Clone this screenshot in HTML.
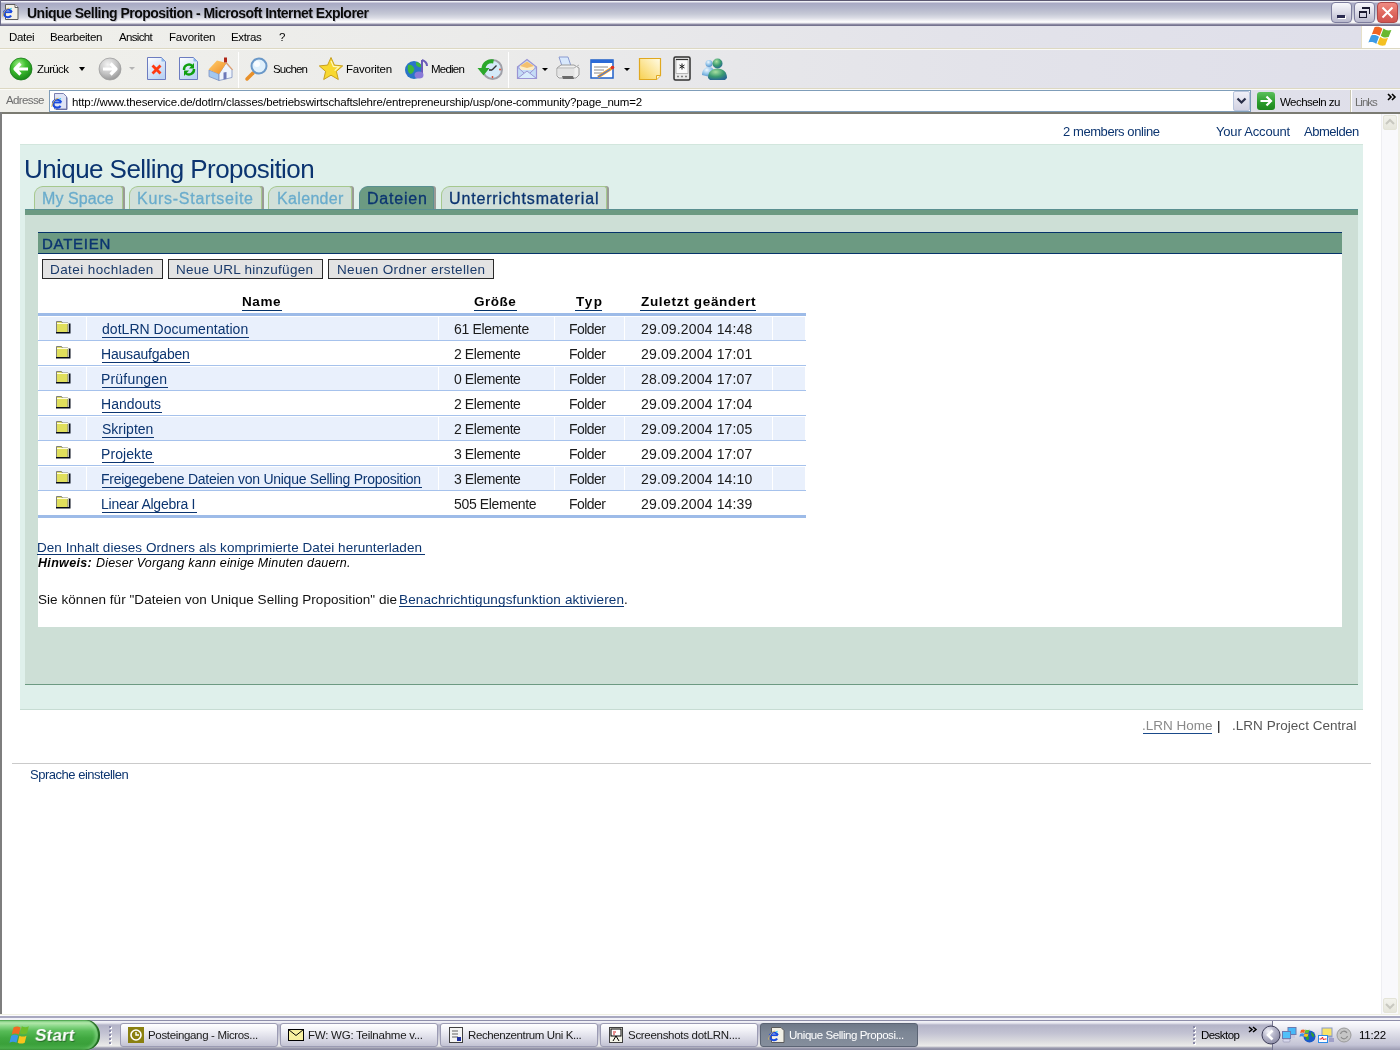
<!DOCTYPE html>
<html><head><meta charset="utf-8"><title>Unique Selling Proposition - Microsoft Internet Explorer</title>
<style>
*{margin:0;padding:0;box-sizing:border-box}
html,body{width:1400px;height:1050px;overflow:hidden;background:#fff;font-family:"Liberation Sans",sans-serif}
.a{position:absolute}
.t{position:absolute;white-space:nowrap;line-height:1;will-change:transform}
svg{position:absolute;overflow:visible}
#titlebar{left:0;top:0;width:1400px;height:26px;background:linear-gradient(#5c5872 0px,#5c5872 1px,#f2f2f8 1px,#eeeef4 2px,#a8a8c4 3px,#acaec6 5px,#b6b8cc 9px,#c6c9d6 14px,#dcdde6 18px,#f6f6f8 21px,#ffffff 22px,#e8e8ec 23px,#a4a2b8 24px,#74728e 25px,#74728e 26px)}
#tbl{left:0;top:0;width:2px;height:26px;background:#8c8ca6}
.grad{background:linear-gradient(90deg,#f0f0eb 0%,#ebebea 35%,#e3e3ea 70%,#dfdfea 100%)}
#menubar{left:0;top:26px;width:1361px;height:22px}
#menubar2{left:1361px;top:26px;width:39px;height:22px;background:#fff;border-left:1px solid #e6e0c8}
#sep1{left:0;top:48px;width:1400px;height:1px;background:#ddd8c2}
#sep1b{left:0;top:49px;width:1400px;height:1px;background:#fbfbf8}
#toolbar{left:0;top:50px;width:1400px;height:38px}
#sep2{left:0;top:88px;width:1400px;height:1px;background:#ddd8c2}
#sep2b{left:0;top:89px;width:1400px;height:1px;background:#fbfbf8}
#addrbar{left:0;top:90px;width:1400px;height:22px}
#addrinput{left:49px;top:90px;width:1202px;height:22px;background:#fff;border:1px solid #7f9db9}
#ddbtn{left:1233px;top:91px;width:17px;height:20px;border:1px solid #b8c4dc;border-radius:2px;background:linear-gradient(#f0f0f8,#d2d2e2)}
#linksep{left:1350px;top:90px;width:2px;height:22px;border-left:1px solid #c9c6b4;border-right:1px solid #fff}
#cborder{left:0;top:112px;width:1400px;height:2px;background:#7b7b72}
#lborder{left:0;top:112px;width:2px;height:903px;background:#7e7e7e}
#rborder{left:1398px;top:114px;width:2px;height:901px;background:#f0f0e6}
#scroll{left:1381px;top:114px;width:17px;height:900px;background:#f9f9fc;border-left:1px solid #eeeef2}
.sbtn{left:1383px;width:14px;height:15px;border-radius:2px;background:linear-gradient(#f2f2ec,#e6e6dc);border:1px solid #e4e4d8}
.tsep{width:1px;height:36px;top:52px;background:#cfcfc8;border-right:1px solid #fff}
.ddarrow{width:0;height:0;border-left:3px solid transparent;border-right:3px solid transparent;border-top:3px solid #000}
/* page */
#panel{left:20px;top:144px;width:1343px;height:566px;background:#dff0eb;border-top:1px solid #d2e6dd;border-bottom:1px solid #c7dcd3}
#gbar{left:25px;top:209px;width:1333px;height:6px;background:#6c9a82;border-top:1px solid #5a9090}
#inner{left:25px;top:215px;width:1333px;height:470px;background:#cddfd6;border-bottom:1px solid #6c9a82}
#wbox{left:38px;top:232px;width:1304px;height:395px;background:#fff}
#hband{left:38px;top:232px;width:1304px;height:22px;background:#6c9a82;border-top:1px solid #06336a;border-bottom:1px solid #06336a}
.btn{top:259px;height:20px;background:#e3e3e3;border:1px solid #2a2a2a}
.tab{top:186px;height:23px;background:#d1e0d9;border:1px solid #a6c88e;border-bottom:none;border-radius:9px 3px 0 0;box-shadow:2px 0 0 #9a9a96}
.tab.on{background:#6c9a82;border-color:#5a9090}
.ul{height:1px;background:#0c3570}
.row{left:39px;width:766px;height:23px}
.row.b{background:#e9f0fc}
.div{left:38px;width:768px;height:1px;background:#a6c2ec}
.vsep{width:1px;height:23px;background:#fff}
.fold{width:17px;height:14px}
#hr{left:12px;top:763px;width:1359px;height:1px;background:#cacaca}
/* taskbar */
#winbot{left:0;top:1014px;width:1400px;height:1px;background:#efefe2}
#taskbar{left:0;top:1015px;width:1400px;height:35px;background:linear-gradient(#fbfbfc 0px,#fbfbfc 1px,#a8a8c0 1px,#a8a8c0 3px,#f2f2f8 3px,#f2f2f8 5px,#8e8eaa 5px,#8e8eaa 6px,#f4f4f8 6px,#e8e8f0 8px,#b4b4c8 10px,#c2c2d2 18px,#dadade 26px,#ececea 31px,#9a9aae 33px,#8a8aa0 35px)}
#tray{left:1272px;top:1021px;width:128px;height:29px;border-left:1px solid #767690;background:linear-gradient(#fcfcfe 0px,#f0f0f6 6px,#d6d6e2 16px,#c4c4d6 24px,#9c9cb2 29px)}
.task{top:1023px;width:158px;height:24px;border-radius:3px;border:1px solid #9b9bb3;background:linear-gradient(#ffffff 0%,#f0f0f6 30%,#d8d8e4 70%,#c3c3d3 100%)}
.task.on{background:linear-gradient(#6e7888 0%,#7d8796 40%,#858e9c 100%);border-color:#5b6474}
#start{left:0;top:1020px;width:100px;height:30px;border-radius:0 14px 14px 0/0 15px 15px 0;background:linear-gradient(#2a8a2a 0px,#7ccc7c 1px,#b4e8ac 3px,#8cd88a 6px,#58bc58 11px,#40a840 18px,#3aa03a 24px,#48ac48 28px,#2a8a2a 30px);box-shadow:inset -2px 0 1px rgba(20,90,20,.9), inset -5px 0 3px rgba(160,230,160,.5)}
</style></head>
<body>
<div class="a" id="titlebar"></div>
<!-- title IE icon -->
<div class="a" style="left:0;top:0;width:1px;height:26px;background:#6a6a88"></div>
<svg style="left:2px;top:4px" width="17" height="16" viewBox="0 0 17 16">
 <path d="M3.5 .5h9.5l3 3v12h-12.5z" fill="#f2f0e6" stroke="#5c5c5c" stroke-width="1"/>
 <path d="M13 .5v3h3" fill="#fff" stroke="#5c5c5c" stroke-width="1"/>
 <g transform="translate(0.0 3.0) scale(1.0000 1.0000)"><path d="M1.2 5.2h8.6" stroke="#1a4ae0" stroke-width="1.8"/>
  <path d="M9.8 5.2A4.1 3.8 0 1 0 9.2 8.6" fill="none" stroke="#1a4ae0" stroke-width="2"/>
  <path d="M8 2.2l1.6-.8" stroke="#30c8f0" stroke-width="1.2"/>
  <path d="M.6 9.5C1 5.5 3.5 2 7 1" fill="none" stroke="#e8c050" stroke-width=".9"/></g>
</svg>
<!-- title buttons -->
<div class="a" style="left:1331px;top:2px;width:21px;height:21px;border-radius:4px;border:1px solid #7e7e9e;background:linear-gradient(#f8f8fc,#dcdce8 50%,#b8b8cc)"></div>
<div class="a" style="left:1337px;top:15px;width:8px;height:3px;background:#2a2a50;box-shadow:1px 1px 0 #fff"></div>
<div class="a" style="left:1354px;top:2px;width:21px;height:21px;border-radius:4px;border:1px solid #7e7e9e;background:linear-gradient(#f8f8fc,#dcdce8 50%,#b8b8cc)"></div>
<div class="a" style="left:1362px;top:7px;width:8px;height:7px;border-top:2px solid #1a1a30;border-right:1px solid #1a1a30"></div>
<div class="a" style="left:1359px;top:11px;width:8px;height:7px;border:1px solid #1a1a30;border-top-width:2px;background:transparent"></div>
<div class="a" style="left:1377px;top:2px;width:21px;height:21px;border-radius:4px;border:1px solid #b04848;background:linear-gradient(#f08c84,#e06a60 50%,#d05450)"></div>
<svg style="left:1377px;top:2px" width="21" height="21"><path d="M5.5 5.5l10 10M15.5 5.5l-10 10" stroke="#fff" stroke-width="2"/></svg>

<div class="a grad" id="menubar"></div><div class="a" id="menubar2"></div>
<!-- windows logo -->
<svg style="left:1370px;top:26px" width="23" height="22" viewBox="1 1.5 19 18">
 <g transform="rotate(10 10 10)">
 <path d="M3.5 3.5c2.2-1.2 4.4-1.2 6.6 0l-1.2 6.2c-2.2-1.2-4.4-1.2-6.6 0z" fill="#f26522"/>
 <path d="M11 3.2c2.2 1.2 4.4 1.2 6.6 0l-1.2 6.2c-2.2 1.2-4.4 1.2-6.6 0z" fill="#68b830"/>
 <path d="M1.9 10.6c2.2-1.2 4.4-1.2 6.6 0l-1.2 6.2c-2.2-1.2-4.4-1.2-6.6 0z" fill="#3d9be6"/>
 <path d="M9.4 10.3c2.2 1.2 4.4 1.2 6.6 0l-1.2 6.2c-2.2 1.2-4.4 1.2-6.6 0z" fill="#f4c020"/>
 </g>
</svg>
<div class="a" id="sep1"></div><div class="a" id="sep1b"></div>
<div class="a grad" id="toolbar"></div>
<div class="a" id="sep2"></div><div class="a" id="sep2b"></div>
<div class="a grad" id="addrbar"></div>
<div class="a" id="addrinput"></div>
<div class="a" id="ddbtn"></div>
<svg style="left:1236px;top:97px" width="11" height="8"><path d="M1.5 1.5l4 4 4-4" fill="none" stroke="#2a2e48" stroke-width="2.2"/></svg>
<div class="a" id="linksep"></div>
<!-- go icon -->
<div class="a" style="left:1257px;top:92px;width:18px;height:18px;border-radius:3px;background:linear-gradient(#5cc05c,#2a9a2a 60%,#1e861e)"></div>
<svg style="left:1257px;top:92px" width="18" height="18"><path d="M3.5 9h10M9.5 4.5l4.5 4.5-4.5 4.5" fill="none" stroke="#fff" stroke-width="2.2"/></svg>
<svg style="left:1386px;top:92px" width="12" height="10"><path d="M2 2l3 3-3 3M6 2l3 3-3 3" fill="none" stroke="#000" stroke-width="1.6"/></svg>
<!-- address IE icon -->
<svg style="left:51px;top:92px" width="17" height="18" viewBox="0 0 17 18">
 <path d="M3.5 1.5h9l3 3v12.5h-12z" fill="#dfe4f6" stroke="#7c80b0" stroke-width="1"/>
 <path d="M5 17.5h11v-12" fill="none" stroke="#6a6ea0" stroke-width="1"/>
 <g transform="translate(0.0 5.0) scale(1.0417 1.0455)"><path d="M1.2 5.2h8.6" stroke="#1a4ae0" stroke-width="1.8"/>
  <path d="M9.8 5.2A4.1 3.8 0 1 0 9.2 8.6" fill="none" stroke="#1a4ae0" stroke-width="2"/>
  <path d="M8 2.2l1.6-.8" stroke="#30c8f0" stroke-width="1.2"/>
  <path d="M.6 9.5C1 5.5 3.5 2 7 1" fill="none" stroke="#e8c050" stroke-width=".9"/></g>
</svg>
<!-- toolbar icons -->
<svg style="left:9px;top:57px" width="24" height="24" viewBox="0 0 24 24">
 <defs><radialGradient id="gg" cx="40%" cy="30%" r="70%"><stop offset="0" stop-color="#a8f090"/><stop offset=".45" stop-color="#40c030"/><stop offset="1" stop-color="#1a8a1a"/></radialGradient>
 <radialGradient id="gr" cx="40%" cy="30%" r="70%"><stop offset="0" stop-color="#f4f4f4"/><stop offset=".6" stop-color="#c4c4c4"/><stop offset="1" stop-color="#9a9a9a"/></radialGradient></defs>
 <circle cx="12" cy="12" r="11" fill="url(#gg)" stroke="#1a7a1a" stroke-width=".8"/>
 <path d="M19 12H7M11.5 6.5L6 12l5.5 5.5" fill="none" stroke="#fff" stroke-width="3.2" stroke-linejoin="round"/>
</svg>
<div class="a ddarrow" style="left:79px;top:67px;border-width:4px 3px 0 3px"></div>
<svg style="left:98px;top:57px" width="24" height="24" viewBox="0 0 24 24">
 <circle cx="12" cy="12" r="11" fill="url(#gr)" stroke="#a0a0a0" stroke-width=".8"/>
 <path d="M5 12h12M12.5 6.5L18 12l-5.5 5.5" fill="none" stroke="#fff" stroke-width="3.2" stroke-linejoin="round"/>
</svg>
<div class="a ddarrow" style="left:129px;top:67px;border-top-color:#b4b4b4"></div>
<!-- stop -->
<svg style="left:147px;top:57px" width="20" height="24" viewBox="0 0 20 24">
 <defs><linearGradient id="pg" x1="0" y1="0" x2=".6" y2="1"><stop offset="0" stop-color="#ffffff"/><stop offset="1" stop-color="#bcd4f4"/></linearGradient></defs>
 <path d="M.5 .5h14l4 4v18h-18z" fill="url(#pg)" stroke="#6c7cc0" stroke-width="1"/>
 <path d="M14.5 .5v4h4z" fill="#8cb8ec"/>
 <path d="M6.5 9.5l6 6M12.5 9.5l-6 6" stroke="#ff3a12" stroke-width="2.8" stroke-linecap="square"/>
</svg>
<!-- refresh -->
<svg style="left:179px;top:57px" width="20" height="24" viewBox="0 0 20 24">
 <path d="M.5 .5h14l4 4v18h-18z" fill="url(#pg)" stroke="#6c7cc0" stroke-width="1"/>
 <path d="M14.5 .5v4h4z" fill="#8cb8ec"/>
 <path d="M5 13a5 5 0 0 1 8.5-4" fill="none" stroke="#10a010" stroke-width="2.4"/>
 <path d="M15 6v5.5h-5z" fill="#10a010"/>
 <path d="M15 12a5 5 0 0 1-8.5 4" fill="none" stroke="#10a010" stroke-width="2.4"/>
 <path d="M5 19v-5.5h5z" fill="#10a010"/>
</svg>
<!-- home -->
<svg style="left:207px;top:56px" width="26" height="26" viewBox="0 0 26 26">
 <defs><linearGradient id="rf" x1="0" y1="0" x2="1" y2="1"><stop offset="0" stop-color="#ffd070"/><stop offset="1" stop-color="#f08a20"/></linearGradient></defs>
 <path d="M2 14l10 4v6.5l-10-4z" fill="#a4c8f0" stroke="#7c90c0" stroke-width=".8"/>
 <path d="M12 18l7-11 6 6.5v8l-13 3z" fill="#eef4fc" stroke="#7c90c0" stroke-width=".8"/>
 <path d="M16.5 16.5l3-.6v7l-3 .7z" fill="#6c78b8"/>
 <path d="M1.5 13.5l8.5-9 9.5 2.5-7.5 11z" fill="url(#rf)"/>
 <path d="M19.5 7l6 6.8" stroke="#e0a070" stroke-width="1.2"/>
 <rect x="17" y="1.5" width="3" height="5" fill="#b02818"/>
</svg>
<div class="a tsep" style="left:238px"></div>
<!-- search -->
<svg style="left:244px;top:57px" width="26" height="25" viewBox="0 0 26 25">
 <path d="M3 22l6-6" stroke="#e8902a" stroke-width="3.5" stroke-linecap="round"/>
 <circle cx="15" cy="9" r="7.5" fill="#dff0fc" stroke="#6a98c8" stroke-width="2"/>
 <circle cx="13" cy="7" r="3" fill="#fff" opacity=".8"/>
</svg>
<!-- star -->
<svg style="left:318px;top:56px" width="26" height="26" viewBox="0 0 26 26">
 <path d="M13 1.5l3.4 7.6 8.3.8-6.3 5.5 1.9 8.1L13 19.2l-7.3 4.3 1.9-8.1L1.3 9.9l8.3-.8z" fill="#f8d830" stroke="#c8a020" stroke-width="1" stroke-linejoin="round"/>
 <path d="M13 5l2.4 5.4 5.5.6-4.2 3.6" fill="none" stroke="#fff8c0" stroke-width="1.2"/>
</svg>
<!-- media -->
<svg style="left:404px;top:57px" width="26" height="25" viewBox="0 0 26 25">
 <circle cx="10" cy="13" r="9" fill="#2a74c8"/>
 <path d="M4 8c3-1 5 1 6 3s-1 5-3 6c-2 0-4-3-3-9zM12 5c3 0 6 3 5 5-2 1-4-1-5-2z" fill="#3cb83c"/>
 <path d="M18 3v14" stroke="#6a5ab8" stroke-width="2"/>
 <path d="M18 3c3 1 5 3 5 6" fill="none" stroke="#6a5ab8" stroke-width="2"/>
 <ellipse cx="15" cy="18" rx="4.5" ry="3.5" fill="#8a7ad8"/>
</svg>
<!-- history -->
<svg style="left:477px;top:57px" width="26" height="25" viewBox="0 0 26 25">
 <circle cx="15.5" cy="12.5" r="9.5" fill="#d4eaf8" stroke="#a0a0a8" stroke-width="2"/>
 <path d="M15 13l4.5-4.5M15 13h-3" stroke="#303030" stroke-width="1.4"/>
 <circle cx="23" cy="12.5" r=".9" fill="#e04020"/><circle cx="15.5" cy="20" r=".9" fill="#e04020"/>
 <path d="M16.5 4.5C11 3.5 6.5 6.5 6.5 12" fill="none" stroke="#2aa82a" stroke-width="4"/>
 <path d="M.5 11h12L6.5 18.5z" fill="#2aa82a"/>
</svg>
<div class="a tsep" style="left:508px"></div>
<!-- mail -->
<svg style="left:516px;top:57px" width="24" height="24" viewBox="0 0 24 24">
 <path d="M1.5 10L11 2.5 20.5 10v11.5h-19z" fill="#c4dcf6" stroke="#9a94d4" stroke-width="1.2"/>
 <path d="M4 9l7-4.5 7 4.5v4H4z" fill="#fcecc8"/>
 <path d="M4 9l7-4.5 7 4.5-7 2z" fill="#f4c070"/>
 <path d="M1.5 21.5L11 14l9.5 7.5z" fill="#d8ecfc" stroke="#9a94d4" stroke-width="1"/>
 <path d="M1.5 10L8 16M20.5 10L14 16" stroke="#9a94d4" stroke-width="1"/>
</svg>
<div class="a ddarrow" style="left:542px;top:68px"></div>
<!-- print -->
<svg style="left:555px;top:56px" width="26" height="26" viewBox="0 0 26 26">
 <path d="M4 1h9l3 9H7z" fill="#d8e8fc" stroke="#8a9ad0" stroke-width="1"/>
 <path d="M2 12l4-3h13l5 3v7l-3 3H4l-2-2z" fill="#f0f0f0" stroke="#9a9a9a" stroke-width="1"/>
 <path d="M2 12h17l5-3" fill="none" stroke="#b0b0b0" stroke-width="1"/>
 <path d="M2.5 13h17v7h-17z" fill="#e4e4e4"/>
 <path d="M7 20h11l1 3H8z" fill="#6a6a6a"/>
</svg>
<!-- edit -->
<svg style="left:590px;top:59px" width="26" height="21" viewBox="0 0 26 21">
 <rect x="1" y="1" width="22" height="18" fill="#fff" stroke="#2060c8" stroke-width="1.5"/>
 <rect x="1" y="1" width="22" height="3" fill="#2a6ad8"/>
 <path d="M4 8h14M4 11h10M4 14h8" stroke="#8a8a8a" stroke-width="1"/>
 <path d="M8 18l14-9" stroke="#f0a030" stroke-width="3"/>
 <path d="M8 18l12-7.5" stroke="#4a7ad8" stroke-width="1.2"/>
 <circle cx="22.5" cy="8.5" r="1.8" fill="#e03020"/>
</svg>
<div class="a ddarrow" style="left:624px;top:68px"></div>
<!-- note -->
<svg style="left:638px;top:57px" width="24" height="24" viewBox="0 0 24 24">
 <defs><linearGradient id="ng" x1="1" y1="0" x2="0" y2="1"><stop offset="0" stop-color="#fffce8"/><stop offset="1" stop-color="#f8d050"/></linearGradient></defs>
 <path d="M1.5 1.5h21v17l-4 4h-17z" fill="url(#ng)" stroke="#e0a820" stroke-width="1.2"/>
 <path d="M18.5 22.5v-4h4" fill="#fff8d0" stroke="#e0a820" stroke-width="1"/>
</svg>
<!-- phone -->
<svg style="left:673px;top:56px" width="19" height="26" viewBox="0 0 19 26">
 <rect x="1" y="1" width="16" height="23" rx="1.5" fill="#e8e8e8" stroke="#303030" stroke-width="1.5"/>
 <rect x="3" y="3.5" width="12" height="14" fill="#fafafa" stroke="#909090" stroke-width=".6"/>
 <path d="M3 3.5h12" stroke="#303030" stroke-width="1.2"/>
 <path d="M9 7.5v6M6.5 9l5 3M11.5 9l-5 3" stroke="#202020" stroke-width="1"/>
 <path d="M4 20.5h2M8 20.5h2M12 20.5h2" stroke="#808080" stroke-width="1.5"/>
</svg>
<!-- messenger -->
<svg style="left:701px;top:57px" width="27" height="24" viewBox="0 0 27 24">
 <defs><radialGradient id="mg" cx="40%" cy="30%" r="70%"><stop offset="0" stop-color="#a8e0a0"/><stop offset=".6" stop-color="#3a9a70"/><stop offset="1" stop-color="#2a6a90"/></radialGradient>
 <radialGradient id="mb" cx="40%" cy="30%" r="70%"><stop offset="0" stop-color="#f0f8ff"/><stop offset=".6" stop-color="#8ac0e8"/><stop offset="1" stop-color="#5a90c8"/></radialGradient></defs>
 <circle cx="8" cy="6.5" r="3.5" fill="url(#mb)"/>
 <path d="M1 18c0-5 3-8 7-8s5 3 5 6l-4 4z" fill="url(#mb)"/>
 <circle cx="16.5" cy="6.5" r="5" fill="url(#mg)"/>
 <path d="M7 21c0-6 4-9.5 9.5-9.5s9.5 3.5 9.5 9.5l-2 2H9z" fill="url(#mg)"/>
</svg>

<!-- content frame -->
<div class="a" id="cborder"></div>
<div class="a" id="lborder"></div>
<div class="a" id="rborder"></div>
<div class="a" id="scroll"></div>
<div class="a sbtn" style="top:115px"></div>
<svg style="left:1384px;top:117px" width="12" height="10"><path d="M2 7l4-4 4 4" fill="none" stroke="#c8c8c0" stroke-width="2"/></svg>
<div class="a sbtn" style="top:998px"></div>
<svg style="left:1384px;top:1001px" width="12" height="10"><path d="M2 3l4 4 4-4" fill="none" stroke="#c8c8c0" stroke-width="2"/></svg>

<!-- page -->
<div class="a" id="panel"></div>
<div class="a tab" style="left:34px;width:89px"></div>
<div class="a tab" style="left:129px;width:133px"></div>
<div class="a tab" style="left:268px;width:84px"></div>
<div class="a tab on" style="left:359px;width:75px"></div>
<div class="a tab" style="left:441px;width:166px"></div>
<div class="a" id="gbar"></div>
<div class="a" id="inner"></div>
<div class="a" id="wbox"></div>
<div class="a" id="hband"></div>
<div class="a btn" style="left:42px;width:121px"></div>
<div class="a btn" style="left:168px;width:155px"></div>
<div class="a btn" style="left:328px;width:166px"></div>
<!-- header underlines -->
<div class="a ul" style="left:242px;top:310px;width:40px;background:#06336a"></div>
<div class="a ul" style="left:474px;top:310px;width:43px;background:#06336a"></div>
<div class="a ul" style="left:575px;top:310px;width:27px;background:#06336a"></div>
<div class="a ul" style="left:640px;top:310px;width:116px;background:#06336a"></div>
<!-- table -->
<div class="a" style="left:38px;top:313px;width:768px;height:3px;background:#9dbbe8"></div>
<div class="a row b" style="top:317px"></div>
<div class="a vsep" style="left:86px;top:317px"></div>
<div class="a vsep" style="left:438px;top:317px"></div>
<div class="a vsep" style="left:554px;top:317px"></div>
<div class="a vsep" style="left:624px;top:317px"></div>
<div class="a vsep" style="left:772px;top:317px"></div>
<div class="a div" style="top:340px"></div>
<div class="a ul" style="left:102px;top:337px;width:147px"></div>
<svg style="left:55px;top:319px" width="16" height="15" viewBox="0 0 16 15"><path d="M1.5 2.5h5l1 1.5h5.5v9.5h-11.5z" fill="#e0df5c" stroke="#808078" stroke-width="1"/><path d="M2 4.5h11" stroke="#fffce0" stroke-width="1"/><path d="M1 13h13v-8.5h1.5v10h-14.5z" fill="#050a18"/></svg>
<div class="a div" style="top:365px"></div>
<div class="a ul" style="left:102px;top:362px;width:88px"></div>
<svg style="left:55px;top:344px" width="16" height="15" viewBox="0 0 16 15"><path d="M1.5 2.5h5l1 1.5h5.5v9.5h-11.5z" fill="#e0df5c" stroke="#808078" stroke-width="1"/><path d="M2 4.5h11" stroke="#fffce0" stroke-width="1"/><path d="M1 13h13v-8.5h1.5v10h-14.5z" fill="#050a18"/></svg>
<div class="a row b" style="top:367px"></div>
<div class="a vsep" style="left:86px;top:367px"></div>
<div class="a vsep" style="left:438px;top:367px"></div>
<div class="a vsep" style="left:554px;top:367px"></div>
<div class="a vsep" style="left:624px;top:367px"></div>
<div class="a vsep" style="left:772px;top:367px"></div>
<div class="a div" style="top:390px"></div>
<div class="a ul" style="left:102px;top:387px;width:66px"></div>
<svg style="left:55px;top:369px" width="16" height="15" viewBox="0 0 16 15"><path d="M1.5 2.5h5l1 1.5h5.5v9.5h-11.5z" fill="#e0df5c" stroke="#808078" stroke-width="1"/><path d="M2 4.5h11" stroke="#fffce0" stroke-width="1"/><path d="M1 13h13v-8.5h1.5v10h-14.5z" fill="#050a18"/></svg>
<div class="a div" style="top:415px"></div>
<div class="a ul" style="left:102px;top:412px;width:60px"></div>
<svg style="left:55px;top:394px" width="16" height="15" viewBox="0 0 16 15"><path d="M1.5 2.5h5l1 1.5h5.5v9.5h-11.5z" fill="#e0df5c" stroke="#808078" stroke-width="1"/><path d="M2 4.5h11" stroke="#fffce0" stroke-width="1"/><path d="M1 13h13v-8.5h1.5v10h-14.5z" fill="#050a18"/></svg>
<div class="a row b" style="top:417px"></div>
<div class="a vsep" style="left:86px;top:417px"></div>
<div class="a vsep" style="left:438px;top:417px"></div>
<div class="a vsep" style="left:554px;top:417px"></div>
<div class="a vsep" style="left:624px;top:417px"></div>
<div class="a vsep" style="left:772px;top:417px"></div>
<div class="a div" style="top:440px"></div>
<div class="a ul" style="left:102px;top:437px;width:52px"></div>
<svg style="left:55px;top:419px" width="16" height="15" viewBox="0 0 16 15"><path d="M1.5 2.5h5l1 1.5h5.5v9.5h-11.5z" fill="#e0df5c" stroke="#808078" stroke-width="1"/><path d="M2 4.5h11" stroke="#fffce0" stroke-width="1"/><path d="M1 13h13v-8.5h1.5v10h-14.5z" fill="#050a18"/></svg>
<div class="a div" style="top:465px"></div>
<div class="a ul" style="left:102px;top:462px;width:52px"></div>
<svg style="left:55px;top:444px" width="16" height="15" viewBox="0 0 16 15"><path d="M1.5 2.5h5l1 1.5h5.5v9.5h-11.5z" fill="#e0df5c" stroke="#808078" stroke-width="1"/><path d="M2 4.5h11" stroke="#fffce0" stroke-width="1"/><path d="M1 13h13v-8.5h1.5v10h-14.5z" fill="#050a18"/></svg>
<div class="a row b" style="top:467px"></div>
<div class="a vsep" style="left:86px;top:467px"></div>
<div class="a vsep" style="left:438px;top:467px"></div>
<div class="a vsep" style="left:554px;top:467px"></div>
<div class="a vsep" style="left:624px;top:467px"></div>
<div class="a vsep" style="left:772px;top:467px"></div>
<div class="a div" style="top:490px"></div>
<div class="a ul" style="left:102px;top:487px;width:320px"></div>
<svg style="left:55px;top:469px" width="16" height="15" viewBox="0 0 16 15"><path d="M1.5 2.5h5l1 1.5h5.5v9.5h-11.5z" fill="#e0df5c" stroke="#808078" stroke-width="1"/><path d="M2 4.5h11" stroke="#fffce0" stroke-width="1"/><path d="M1 13h13v-8.5h1.5v10h-14.5z" fill="#050a18"/></svg>
<div class="a ul" style="left:102px;top:512px;width:95px"></div>
<svg style="left:55px;top:494px" width="16" height="15" viewBox="0 0 16 15"><path d="M1.5 2.5h5l1 1.5h5.5v9.5h-11.5z" fill="#e0df5c" stroke="#808078" stroke-width="1"/><path d="M2 4.5h11" stroke="#fffce0" stroke-width="1"/><path d="M1 13h13v-8.5h1.5v10h-14.5z" fill="#050a18"/></svg>
<div class="a" style="left:38px;top:515px;width:768px;height:3px;background:#9dbbe8"></div>
<!-- link underlines -->
<div class="a ul" style="left:37px;top:554px;width:388px"></div>
<div class="a ul" style="left:399px;top:606px;width:225px"></div>
<div class="a ul" style="left:1143px;top:733px;width:69px;background:#1a4a8a"></div>
<div class="a" id="hr"></div>

<!-- taskbar -->
<div class="a" id="winbot"></div>
<div class="a" id="taskbar"></div>
<div class="a" id="tray"></div>
<div class="a" id="start"></div>
<svg style="left:10px;top:1025px" width="20" height="19" viewBox="0 0 17 16">
 <path d="M3 2c2-1 4-1 6 0l-1.5 6c-2-1-4-1-6 0z" fill="#f06a22"/>
 <path d="M10 1c2 1 4 1 6 0l-1.5 6c-2 1-4 1-6 0z" fill="#6cbd2c"/>
 <path d="M1 9c2-1 4-1 6 0l-1.5 6c-2-1-4-1-6 0z" fill="#3c98e8"/>
 <path d="M8 9c2 1 4 1 6 0l-1.5 6c-2 1-4 1-6 0z" fill="#f8c41c"/>
</svg>
<div class="t" style="left:33.5px;top:1027px;font-size:17px;font-weight:bold;color:#fff;letter-spacing:0.2px;transform:skewX(-8deg);transform-origin:0 100%;text-shadow:1px 1px 1px rgba(20,70,20,.7)">Start</div>
<svg style="left:106px;top:1026px" width="8" height="22"><g fill="#fff"><rect x="4" y="1" width="2" height="2"/><rect x="4" y="5" width="2" height="2"/><rect x="4" y="9" width="2" height="2"/><rect x="4" y="13" width="2" height="2"/><rect x="4" y="17" width="2" height="2"/></g><g fill="#8a8aa8"><rect x="3" y="0" width="2" height="2"/><rect x="3" y="4" width="2" height="2"/><rect x="3" y="8" width="2" height="2"/><rect x="3" y="12" width="2" height="2"/><rect x="3" y="16" width="2" height="2"/></g></svg>
<div class="a task" style="left:120px"></div>
<div class="a task" style="left:280px"></div>
<div class="a task" style="left:440px"></div>
<div class="a task" style="left:600px"></div>
<div class="a task on" style="left:760px"></div>
<!-- task icons -->
<svg style="left:128px;top:1027px" width="16" height="16"><rect width="16" height="16" fill="#8a8010"/><circle cx="8" cy="8" r="5" fill="none" stroke="#fff" stroke-width="1.6"/><path d="M8 5v3h3" stroke="#fff" stroke-width="1.4" fill="none"/></svg>
<svg style="left:288px;top:1029px" width="16" height="12"><rect x=".5" y=".5" width="15" height="11" fill="#f8f0a0" stroke="#000"/><path d="M.5 .5l7.5 6 7.5-6" fill="none" stroke="#000"/></svg>
<svg style="left:449px;top:1027px" width="14" height="16"><rect x=".5" y=".5" width="13" height="15" fill="#f4f4f4" stroke="#404040"/><path d="M3 4h6M3 7h6M3 10h6" stroke="#606060"/><rect x="8" y="10" width="4" height="4" fill="#2030a0"/></svg>
<svg style="left:609px;top:1027px" width="14" height="16"><rect x=".5" y=".5" width="13" height="15" fill="#f4f4e8" stroke="#404040"/><rect x="2" y="2" width="10" height="7" fill="#fff" stroke="#000"/><path d="M4 5h3M4 7h2" stroke="#d02020"/><path d="M7 9l-3 5M7 9l3 5" stroke="#000"/></svg>
<svg style="left:768px;top:1027px" width="17" height="16" viewBox="0 0 17 16">
 <path d="M3.5 .5h9.5l3 3v12h-12.5z" fill="#f2f0e6" stroke="#5c5c5c" stroke-width="1"/>
 <g transform="translate(0.0 3.0) scale(1.0000 1.0000)"><path d="M1.2 5.2h8.6" stroke="#1a4ae0" stroke-width="1.8"/>
  <path d="M9.8 5.2A4.1 3.8 0 1 0 9.2 8.6" fill="none" stroke="#1a4ae0" stroke-width="2"/>
  <path d="M8 2.2l1.6-.8" stroke="#30c8f0" stroke-width="1.2"/>
  <path d="M.6 9.5C1 5.5 3.5 2 7 1" fill="none" stroke="#e8c050" stroke-width=".9"/></g>
</svg>
<svg style="left:1191px;top:1026px" width="8" height="22"><g fill="#fff"><rect x="3" y="1" width="2" height="2"/><rect x="3" y="5" width="2" height="2"/><rect x="3" y="9" width="2" height="2"/><rect x="3" y="13" width="2" height="2"/><rect x="3" y="17" width="2" height="2"/></g><g fill="#8a8aa8"><rect x="2" y="0" width="2" height="2"/><rect x="2" y="4" width="2" height="2"/><rect x="2" y="8" width="2" height="2"/><rect x="2" y="12" width="2" height="2"/><rect x="2" y="16" width="2" height="2"/></g></svg>
<svg style="left:1248px;top:1026px" width="10" height="7"><path d="M1 1l3 2.5-3 2.5M5 1l3 2.5-3 2.5" fill="none" stroke="#000" stroke-width="1.5"/></svg>
<!-- tray -->
<svg style="left:1261px;top:1025px" width="21" height="21" viewBox="0 0 21 21">
 <defs><radialGradient id="cg" cx="35%" cy="30%" r="75%"><stop offset="0" stop-color="#f4f4fa"/><stop offset=".5" stop-color="#b4b4c8"/><stop offset="1" stop-color="#8a8aa4"/></radialGradient></defs>
 <circle cx="10" cy="10" r="9" fill="url(#cg)" stroke="#40405a" stroke-width="1"/>
 <path d="M11.5 5.5l-4.5 4.5 4.5 4.5" fill="none" stroke="#fff" stroke-width="2.6"/>
</svg>
<svg style="left:1282px;top:1027px" width="16" height="16" viewBox="0 0 16 16">
 <rect x="6" y=".5" width="8" height="7" fill="#48b8f8" stroke="#6a7ab0"/>
 <rect x="9" y="8" width="4" height="3" fill="#c8c8e0"/>
 <rect x=".5" y="4.5" width="8" height="7" fill="#50c0f8" stroke="#6a7ab0"/>
 <rect x="1" y="12" width="7" height="3" rx="1" fill="#d8d8ec" stroke="#9090b0" stroke-width=".6"/>
</svg>
<svg style="left:1300px;top:1027px" width="16" height="16" viewBox="0 0 16 16">
 <circle cx="9.5" cy="9.5" r="6" fill="#1a5ac8"/>
 <path d="M6 7c2 0 3 2 3 4s-2 3-3 1zM11 5c2 1 4 3 3 5-2 0-3-2-3-5z" fill="#30a030"/>
 <path d="M1 3c1.5-.7 2.8-.7 4 0l-.8 3c-1.2-.7-2.5-.7-4 0z" fill="#f06020"/>
 <path d="M5.5 2.5c1.5.7 2.8.7 4 0l-.8 3c-1.2.7-2.5.7-4 0z" fill="#60c030"/>
 <path d="M.2 6.7c1.5-.7 2.8-.7 4 0l-.8 3c-1.2-.7-2.5-.7-4 0z" fill="#4090e8"/>
 <path d="M4.6 6.2c1.5.7 2.8.7 4 0l-.8 3c-1.2.7-2.5.7-4 0z" fill="#f8c020"/>
</svg>
<svg style="left:1318px;top:1027px" width="17" height="16" viewBox="0 0 17 16">
 <rect x="3.5" y=".5" width="11" height="10" fill="#8a9ac8"/>
 <rect x="4.5" y="1.5" width="9" height="7" fill="#f8e468"/>
 <rect x="11" y="11" width="5" height="4" fill="#a0a0c8"/>
 <rect x=".5" y="8.5" width="9" height="7" fill="#fff" stroke="#2a8ae8"/>
 <path d="M1.5 12h2l1-2 1 3 1-1h2" stroke="#e02020" fill="none"/>
</svg>
<svg style="left:1336px;top:1027px" width="16" height="16" viewBox="0 0 16 16">
 <circle cx="8" cy="8" r="7" fill="#c6c6c6" stroke="#9a9a9a"/>
 <path d="M4.5 7a3.5 3.5 0 0 1 6.5-1M11.5 9a3.5 3.5 0 0 1-6.5 1" fill="none" stroke="#8a8a8a" stroke-width="1.2"/>
</svg>
<div class="t" style="left:27.40px;top:6.15px;font-size:14px;color:#0a0a0a;font-weight:bold;letter-spacing:-0.513px;text-shadow:1px 1px 0 rgba(160,160,180,.5)">Unique Selling Proposition - Microsoft Internet Explorer</div>
<div class="t" style="left:9.40px;top:32.07px;font-size:11.5px;color:#000;letter-spacing:-0.298px">Datei</div>
<div class="t" style="left:50.40px;top:32.07px;font-size:11.5px;color:#000;letter-spacing:-0.359px">Bearbeiten</div>
<div class="t" style="left:118.60px;top:32.07px;font-size:11.5px;color:#000;letter-spacing:-0.686px">Ansicht</div>
<div class="t" style="left:169.30px;top:32.07px;font-size:11.5px;color:#000;letter-spacing:-0.180px">Favoriten</div>
<div class="t" style="left:231.40px;top:32.07px;font-size:11.5px;color:#000;letter-spacing:-0.348px">Extras</div>
<div class="t" style="left:278.50px;top:32.07px;font-size:11.5px;color:#000">?</div>
<div class="t" style="left:36.60px;top:64.07px;font-size:11.5px;color:#000;letter-spacing:-0.639px">Zurück</div>
<div class="t" style="left:272.50px;top:64.07px;font-size:11.5px;color:#000;letter-spacing:-0.802px">Suchen</div>
<div class="t" style="left:346.40px;top:64.07px;font-size:11.5px;color:#000;letter-spacing:-0.230px">Favoriten</div>
<div class="t" style="left:431.40px;top:64.07px;font-size:11.5px;color:#000;letter-spacing:-0.784px">Medien</div>
<div class="t" style="left:6.00px;top:95.07px;font-size:11.5px;color:#6d6d6d;letter-spacing:-0.632px">Adresse</div>
<div class="t" style="left:71.60px;top:97.07px;font-size:11.5px;color:#000;letter-spacing:-0.179px">http://www.theservice.de/dotlrn/classes/betriebswirtschaftslehre/entrepreneurship/usp/one-community?page_num=2</div>
<div class="t" style="left:1279.50px;top:97.07px;font-size:11.5px;color:#000;letter-spacing:-0.523px">Wechseln zu</div>
<div class="t" style="left:1355.00px;top:97.07px;font-size:11.5px;color:#6d6d6d;letter-spacing:-1.024px">Links</div>
<div class="t" style="left:1062.60px;top:125.00px;font-size:13px;color:#0c3570;letter-spacing:-0.426px">2 members online</div>
<div class="t" style="left:1215.70px;top:125.00px;font-size:13px;color:#0c3570;letter-spacing:-0.176px">Your Account</div>
<div class="t" style="left:1303.70px;top:125.00px;font-size:13px;color:#0c3570;letter-spacing:-0.487px">Abmelden</div>
<div class="t" style="left:24.20px;top:155.99px;font-size:26px;color:#0b3470;letter-spacing:-0.572px">Unique Selling Proposition</div>
<div class="t" style="left:42.30px;top:191.46px;font-size:16px;color:#6aaccc;letter-spacing:0.065px;-webkit-text-stroke:0.3px #6aaccc">My Space</div>
<div class="t" style="left:137.20px;top:191.46px;font-size:16px;color:#6aaccc;letter-spacing:0.728px;-webkit-text-stroke:0.3px #6aaccc">Kurs-Startseite</div>
<div class="t" style="left:276.50px;top:191.46px;font-size:16px;color:#6aaccc;letter-spacing:0.340px;-webkit-text-stroke:0.3px #6aaccc">Kalender</div>
<div class="t" style="left:367.20px;top:191.46px;font-size:16px;color:#0b3470;letter-spacing:0.775px;-webkit-text-stroke:0.3px #0b3470">Dateien</div>
<div class="t" style="left:449.00px;top:191.46px;font-size:16px;color:#0b3470;letter-spacing:0.844px;-webkit-text-stroke:0.3px #0b3470">Unterrichtsmaterial</div>
<div class="t" style="left:41.70px;top:236.30px;font-size:15px;color:#0b3470;letter-spacing:0.723px;-webkit-text-stroke:0.4px #0b3470">DATEIEN</div>
<div class="t" style="left:50.40px;top:262.57px;font-size:13.5px;color:#1a3a6a;letter-spacing:0.410px">Datei hochladen</div>
<div class="t" style="left:176.40px;top:262.57px;font-size:13.5px;color:#1a3a6a;letter-spacing:0.254px">Neue URL hinzufügen</div>
<div class="t" style="left:336.50px;top:262.57px;font-size:13.5px;color:#1a3a6a;letter-spacing:0.366px">Neuen Ordner erstellen</div>
<div class="t" style="left:242.10px;top:295.07px;font-size:13.5px;color:#000;font-weight:bold;letter-spacing:0.580px">Name</div>
<div class="t" style="left:474.30px;top:295.07px;font-size:13.5px;color:#000;font-weight:bold;letter-spacing:0.513px">Größe</div>
<div class="t" style="left:575.70px;top:295.07px;font-size:13.5px;color:#000;font-weight:bold;letter-spacing:1.474px">Typ</div>
<div class="t" style="left:640.60px;top:295.07px;font-size:13.5px;color:#000;font-weight:bold;letter-spacing:0.689px">Zuletzt geändert</div>
<div class="t" style="left:102.30px;top:322.15px;font-size:14px;color:#0c3570;letter-spacing:0.035px">dotLRN Documentation</div>
<div class="t" style="left:453.70px;top:322.15px;font-size:14px;color:#1a1a1a;letter-spacing:-0.342px">61 Elemente</div>
<div class="t" style="left:569.00px;top:322.15px;font-size:14px;color:#1a1a1a;letter-spacing:-0.544px">Folder</div>
<div class="t" style="left:641.40px;top:322.15px;font-size:14px;color:#1a1a1a;letter-spacing:0.153px">29.09.2004 14:48</div>
<div class="t" style="left:101.30px;top:347.15px;font-size:14px;color:#0c3570;letter-spacing:-0.199px">Hausaufgaben</div>
<div class="t" style="left:454.30px;top:347.15px;font-size:14px;color:#1a1a1a;letter-spacing:-0.437px">2 Elemente</div>
<div class="t" style="left:569.00px;top:347.15px;font-size:14px;color:#1a1a1a;letter-spacing:-0.544px">Folder</div>
<div class="t" style="left:641.40px;top:347.15px;font-size:14px;color:#1a1a1a;letter-spacing:0.153px">29.09.2004 17:01</div>
<div class="t" style="left:101.30px;top:372.15px;font-size:14px;color:#0c3570;letter-spacing:0.185px">Prüfungen</div>
<div class="t" style="left:454.30px;top:372.15px;font-size:14px;color:#1a1a1a;letter-spacing:-0.437px">0 Elemente</div>
<div class="t" style="left:569.00px;top:372.15px;font-size:14px;color:#1a1a1a;letter-spacing:-0.544px">Folder</div>
<div class="t" style="left:641.40px;top:372.15px;font-size:14px;color:#1a1a1a;letter-spacing:0.153px">28.09.2004 17:07</div>
<div class="t" style="left:101.30px;top:397.15px;font-size:14px;color:#0c3570;letter-spacing:0.024px">Handouts</div>
<div class="t" style="left:454.30px;top:397.15px;font-size:14px;color:#1a1a1a;letter-spacing:-0.437px">2 Elemente</div>
<div class="t" style="left:569.00px;top:397.15px;font-size:14px;color:#1a1a1a;letter-spacing:-0.544px">Folder</div>
<div class="t" style="left:641.40px;top:397.15px;font-size:14px;color:#1a1a1a;letter-spacing:0.153px">29.09.2004 17:04</div>
<div class="t" style="left:102.30px;top:422.15px;font-size:14px;color:#0c3570">Skripten</div>
<div class="t" style="left:454.30px;top:422.15px;font-size:14px;color:#1a1a1a;letter-spacing:-0.437px">2 Elemente</div>
<div class="t" style="left:569.00px;top:422.15px;font-size:14px;color:#1a1a1a;letter-spacing:-0.544px">Folder</div>
<div class="t" style="left:641.40px;top:422.15px;font-size:14px;color:#1a1a1a;letter-spacing:0.153px">29.09.2004 17:05</div>
<div class="t" style="left:101.30px;top:447.15px;font-size:14px;color:#0c3570;letter-spacing:0.075px">Projekte</div>
<div class="t" style="left:454.30px;top:447.15px;font-size:14px;color:#1a1a1a;letter-spacing:-0.437px">3 Elemente</div>
<div class="t" style="left:569.00px;top:447.15px;font-size:14px;color:#1a1a1a;letter-spacing:-0.544px">Folder</div>
<div class="t" style="left:641.40px;top:447.15px;font-size:14px;color:#1a1a1a;letter-spacing:0.153px">29.09.2004 17:07</div>
<div class="t" style="left:101.30px;top:472.15px;font-size:14px;color:#0c3570;letter-spacing:-0.260px">Freigegebene Dateien von Unique Selling Proposition</div>
<div class="t" style="left:454.30px;top:472.15px;font-size:14px;color:#1a1a1a;letter-spacing:-0.437px">3 Elemente</div>
<div class="t" style="left:569.00px;top:472.15px;font-size:14px;color:#1a1a1a;letter-spacing:-0.544px">Folder</div>
<div class="t" style="left:641.40px;top:472.15px;font-size:14px;color:#1a1a1a;letter-spacing:0.153px">29.09.2004 14:10</div>
<div class="t" style="left:101.30px;top:497.15px;font-size:14px;color:#0c3570;letter-spacing:-0.237px">Linear Algebra I</div>
<div class="t" style="left:454.30px;top:497.15px;font-size:14px;color:#1a1a1a;letter-spacing:-0.346px">505 Elemente</div>
<div class="t" style="left:569.00px;top:497.15px;font-size:14px;color:#1a1a1a;letter-spacing:-0.544px">Folder</div>
<div class="t" style="left:641.40px;top:497.15px;font-size:14px;color:#1a1a1a;letter-spacing:0.153px">29.09.2004 14:39</div>
<div class="t" style="left:36.50px;top:540.57px;font-size:13.5px;color:#0c3570;letter-spacing:0.050px">Den Inhalt dieses Ordners als komprimierte Datei herunterladen</div>
<div class="t" style="left:37.50px;top:557.42px;font-size:12.5px;color:#000;font-weight:bold;font-style:italic;letter-spacing:0.324px">Hinweis:</div>
<div class="t" style="left:96.00px;top:557.42px;font-size:12.5px;color:#000;font-style:italic;letter-spacing:0.167px">Dieser Vorgang kann einige Minuten dauern.</div>
<div class="t" style="left:37.50px;top:592.57px;font-size:13.5px;color:#111;letter-spacing:0.047px">Sie können für "Dateien von Unique Selling Proposition" die</div>
<div class="t" style="left:398.50px;top:592.57px;font-size:13.5px;color:#0c3570;letter-spacing:0.146px">Benachrichtigungsfunktion aktivieren</div>
<div class="t" style="left:623.50px;top:592.57px;font-size:13.5px;color:#111">.</div>
<div class="t" style="left:1142.10px;top:718.57px;font-size:13.5px;color:#8a8a8a;letter-spacing:-0.014px">.LRN Home</div>
<div class="t" style="left:1217.00px;top:718.57px;font-size:13.5px;color:#000">|</div>
<div class="t" style="left:1232.20px;top:718.57px;font-size:13.5px;color:#555;letter-spacing:0.032px">.LRN Project Central</div>
<div class="t" style="left:29.50px;top:768.00px;font-size:13px;color:#0c3570;letter-spacing:-0.484px">Sprache einstellen</div>
<div class="t" style="left:147.50px;top:1030.07px;font-size:11.5px;color:#1a1a1a;letter-spacing:-0.337px">Posteingang - Micros...</div>
<div class="t" style="left:307.50px;top:1030.07px;font-size:11.5px;color:#1a1a1a;letter-spacing:-0.245px">FW: WG: Teilnahme v...</div>
<div class="t" style="left:467.50px;top:1030.07px;font-size:11.5px;color:#1a1a1a;letter-spacing:-0.399px">Rechenzentrum Uni K...</div>
<div class="t" style="left:627.50px;top:1030.07px;font-size:11.5px;color:#1a1a1a;letter-spacing:-0.295px">Screenshots dotLRN....</div>
<div class="t" style="left:788.75px;top:1030.07px;font-size:11.5px;color:#ffffff;letter-spacing:-0.447px">Unique Selling Proposi...</div>
<div class="t" style="left:1201.20px;top:1030.07px;font-size:11.5px;color:#000;letter-spacing:-0.549px">Desktop</div>
<div class="t" style="left:1359.20px;top:1030.07px;font-size:11.5px;color:#000;letter-spacing:-0.182px">11:22</div>
</body></html>
